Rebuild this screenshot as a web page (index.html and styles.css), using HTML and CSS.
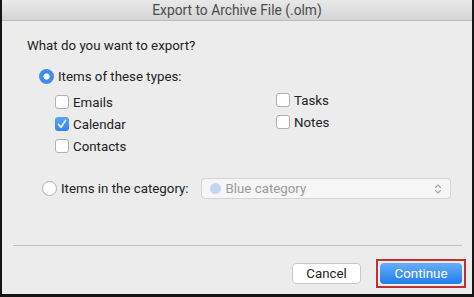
FILE: index.html
```html
<!DOCTYPE html>
<html lang="en">
<head>
    <meta charset="UTF-8">
    <title>Export to Archive File (.olm)</title>
    <link rel="stylesheet" href="styles.css">
</head>

<body>

<div class="window">

    <div class="titlebar">Export to Archive File (.olm)</div>

    <div class="sheet">

        <p class="question">What do you want to export?</p>

        <label class="radio-row">
            <span class="radio on"></span>
            Items of these types:
        </label>

        <div class="types">
            <div class="column">
                <label class="check"><span class="box"></span>Emails</label>
                <label class="check"><span class="box on">
                    <svg viewBox="0 0 14 14" width="14" height="14"><path d="M3.6 7.4 L6 10.2 L10.6 3.4" fill="none" stroke="#fff" stroke-width="1.6" stroke-linecap="round" stroke-linejoin="round"/></svg>
                </span>Calendar</label>
                <label class="check"><span class="box"></span>Contacts</label>
            </div>
            <div class="column right">
                <label class="check"><span class="box"></span>Tasks</label>
                <label class="check"><span class="box"></span>Notes</label>
            </div>
        </div>

        <div class="category-row">
            <label class="radio-row">
                <span class="radio"></span>
                Items in the category:
            </label>
            <div class="select">
                <span class="dot"></span>
                <span class="select-text">Blue category</span>
                <svg class="arrows" viewBox="0 0 8 12" width="8" height="12"><path d="M1.5 4.5 L4 2 L6.5 4.5 M1.5 7.5 L4 10 L6.5 7.5" fill="none" stroke="#a8a8a8" stroke-width="1.1" stroke-linecap="round" stroke-linejoin="round"/></svg>
            </div>
        </div>

    </div>

    <hr class="separator">

    <div class="buttons">
        <button class="button">Cancel</button>
        <span class="focus-ring">
            <button class="button primary">Continue</button>
        </span>
    </div>

</div>

</body>
</html>
```

FILE: styles.css
```css
body {
    margin:     0;
    font-family: Roboto, "Liberation Sans", sans-serif;
    font-size:  13.3px;
    color:      #222;
}

.window {
    width:      474px;
    height:     297px;
    box-sizing: border-box;
    border-left:   2px solid #151515;
    border-right:  2px solid #151515;
    border-bottom: 3px solid #151515;
    background: #ececec;
    display:    flex;
    flex-direction: column;
}

.titlebar {
    height:     20px;
    line-height: 20px;
    font-size:  13.8px;
    text-align: center;
    color:      #4b4b4b;
    background: linear-gradient(#e9e9e9, #d4d4d4);
    border-bottom: 1px solid #bcbcbc;
}

.sheet { /* the form part, above the line */
    padding:    17px 0 0 25px;
    height:     224px;
    box-sizing: border-box;
}

.question {
    margin:     0 0 13px;
    line-height: 16px;
}

.radio-row {
    display:    flex;
    align-items: center;
    gap:        4px;
    height:     18px;
    padding-left: 12px;
}
.radio {
    width:      15px;
    height:     15px;
    box-sizing: border-box;
    border-radius: 50%;
    border:     1px solid #b0b0b0;
    background: #fff;
}
.radio.on {
    border:     none;
    background: radial-gradient(circle, #fff 0 2.8px, #3c8df0 3.4px);
}

.types {
    display:    flex;
    padding-left: 28px;
}
.column {
    width:      221px;
    flex-shrink: 0;
    display:    flex;
    flex-direction: column;
    gap:        2px;
    margin-top: 7px;
}
.column.right {
    width:      auto;
    margin-top: 5px;
}

.check {
    display:    flex;
    align-items: center;
    gap:        4px;
    height:     20px;
}
.box {
    width:      14px;
    height:     14px;
    box-sizing: border-box;
    border:     1px solid #b0b0b0;
    border-radius: 3px;
    background: #fff;
    display:    flex;
}
.box.on {
    border:     none;
    background: linear-gradient(#5aa4f5, #3187ee);
}

.category-row {
    display:    flex;
    align-items: center;
    margin-top: 22px;
    padding-left: 3px;
    gap:        12px;
}

.select {
    width:      250px;
    height:     21px;
    box-sizing: border-box;
    border:     1px solid #d4d4d4;
    border-radius: 4px;
    background: #f6f6f6;
    display:    flex;
    align-items: center;
    gap:        5px;
    padding:    0 8px 0 8px;
    color:      #9b9b9b;
}
.dot {
    width:      11px;
    height:     11px;
    border-radius: 50%;
    background: #c4d5f1;
}
.select-text {
    flex:       1;
}

.separator {
    margin:     0 10px 0 11px;
    border:     none;
    border-top: 1px solid #c2c2c2;
}

.buttons {
    display:    flex;
    justify-content: flex-end;
    align-items: center;
    gap:        15px;
    padding:    13px 6px 0 0;
}
.button {
    height:     21px;
    padding:    0;
    font:       inherit;
    color:      #222;
    background: #fff;
    border:     1px solid #c8c8c8;
    border-radius: 4px;
    width:      69px;
}
.focus-ring { /* the red mark drawn round the default button */
    display:    flex;
    padding:    2px;
    border:     2px solid #c2302f;
}
.button.primary {
    width:      82px;
    color:      #fff;
    border:     none;
    background: linear-gradient(#68aef7, #1f7ded);
}
```
